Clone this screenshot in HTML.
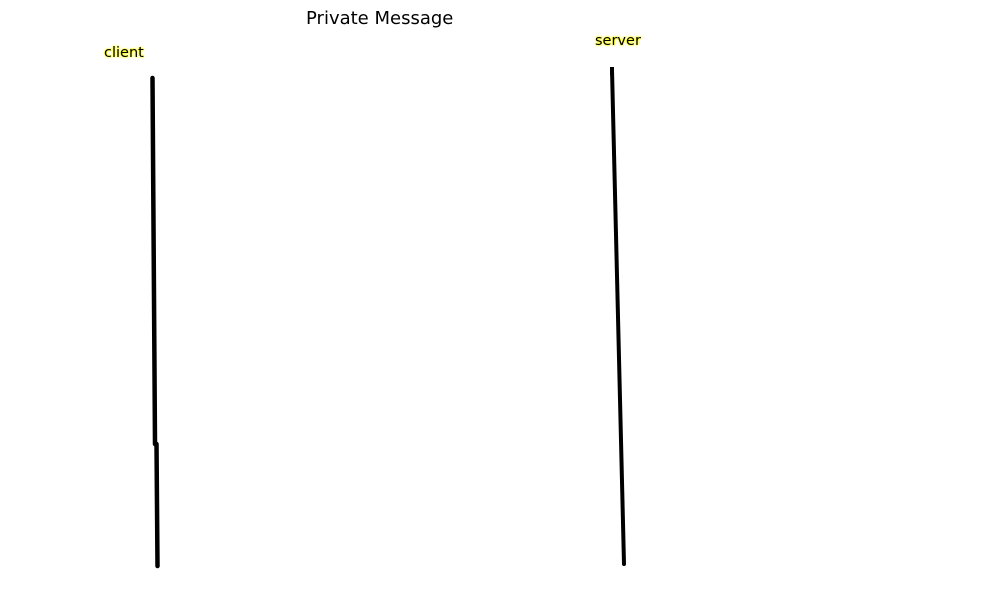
<!DOCTYPE html>
<html><head><meta charset="utf-8"><style>
html,body{margin:0;padding:0;background:#fff;width:1000px;height:600px;overflow:hidden;font-family:"DejaVu Sans","Liberation Sans",sans-serif}
.t{position:absolute;white-space:nowrap}
.lab{font-size:14.5px;color:#000;text-shadow:0 0 1px #ff0,0 0 2px #ff0,0 0 2px #ff0}
</style></head><body>
<div class="t" style="left:306px;top:8px;font-size:18px;color:#000">Private Message</div>
<div class="t lab" style="left:104px;top:45px">client</div>
<div class="t lab" style="left:595px;top:33px">server</div>
<svg width="1000" height="600" style="position:absolute;left:0;top:0">
<line x1="152.5" y1="78" x2="155" y2="444" stroke="#000" stroke-width="4.5" stroke-linecap="round"/>
<line x1="156.5" y1="444" x2="157.5" y2="566" stroke="#000" stroke-width="4.5" stroke-linecap="round"/>
<line x1="612" y1="70" x2="624" y2="564" stroke="#000" stroke-width="4" stroke-linecap="round"/>
<rect x="610" y="67" width="4" height="8" fill="#000"/>
</svg>
</body></html>
